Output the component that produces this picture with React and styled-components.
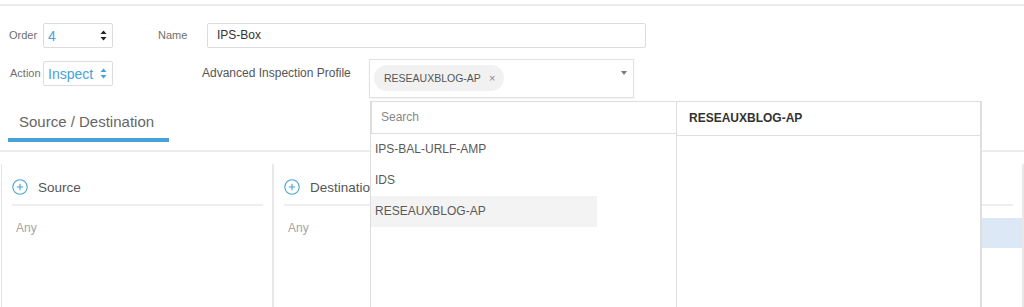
import React from 'react';
import styled, { createGlobalStyle } from 'styled-components';

const GlobalStyle = createGlobalStyle`
	body {
		margin: 0;
		background: #fff;
		font-family: "Liberation Sans", Arial, sans-serif;
	}
`

const Page = styled.div`
	width: 1024px;
	height: 307px;
	overflow: hidden;
	position: relative;
`

const TopRule = styled.div`
	margin-top: 4px;
	height: 2px;
	background: #ececec;
`

const Form = styled.div`
	padding-top: 17px;
`

const Row = styled.div`
	display: flex;
	align-items: flex-start;
	padding-left: ${p => p.$indent}px;
	margin-top: ${p => p.$top || 0}px;
	height: ${p => p.$height}px;
`

const Label = styled.label`
	width: ${p => p.$width}px;
	margin-left: ${p => p.$offset || 0}px;
	margin-top: ${p => p.$top || 0}px;
	height: 25px;
	line-height: 25px;
	font-size: ${p => p.$size || 11}px;
	color: ${p => p.$color || '#707070'};
	white-space: nowrap;
`

const Select = styled.div`
	box-sizing: border-box;
	width: 70px;
	height: 25px;
	margin-top: ${p => p.$top || 0}px;
	border: 1px solid #dcdcdc;
	border-radius: 2px;
	display: flex;
	align-items: center;
	justify-content: space-between;
	padding: 0 5px 0 4px;
	font-size: 14px;
	color: #47a2d8;
`

const TextInput = styled.div`
	box-sizing: border-box;
	width: 439px;
	height: 25px;
	border: 1px solid #dcdcdc;
	border-radius: 2px;
	padding-left: 9px;
	line-height: 23px;
	font-size: 12px;
	color: #333;
`

const MultiWrap = styled.div`
	position: relative;
`

const MultiBox = styled.div`
	box-sizing: border-box;
	width: 265px;
	height: 39px;
	border: 1px solid #e2e2e2;
	box-shadow: 0 1px 2px rgba(0, 0, 0, 0.06);
	display: flex;
	align-items: flex-start;
	padding: 5px 4px;
`

const Chip = styled.span`
	height: 26px;
	border-radius: 13px;
	background: #f1f1f1;
	display: flex;
	align-items: center;
	padding: 0 9px 0 10px;
	font-size: 10.5px;
	color: #555;
`

const ChipClose = styled.span`
	margin-left: 8px;
	font-size: 11px;
	color: #888;
`

const Caret = styled.span`
	margin-left: auto;
	margin-right: 2px;
	margin-top: 6px;
	width: 0;
	height: 0;
	border-left: 3.5px solid transparent;
	border-right: 3.5px solid transparent;
	border-top: 4px solid #7a7a7a;
`

const Dropdown = styled.div`
	position: absolute;
	top: 42px;
	left: 1px;
	width: 612px;
	height: 240px;
	display: flex;
	background: #fff;
	z-index: 5;
`

const ListPane = styled.div`
	box-sizing: border-box;
	width: 307px;
	border-left: 1px solid #ddd;
	border-right: 1px solid #ddd;
	background: #fff;
`

const Search = styled.div`
	box-sizing: border-box;
	height: 33px;
	border: 1px solid #ddd;
	border-right: none;
	padding-left: 9px;
	line-height: 31px;
	font-size: 12px;
	color: #888;
`

const Item = styled.div`
	box-sizing: border-box;
	width: ${p => (p.$active ? '226px' : 'auto')};
	height: 31px;
	line-height: 31px;
	padding-left: 4px;
	font-size: 12px;
	color: #5a5a5a;
	background: ${p => (p.$active ? '#f3f3f3' : 'transparent')};
`

const DetailPane = styled.div`
	box-sizing: border-box;
	width: 305px;
	border-top: 1px solid #ddd;
	border-right: 2px solid #dedede;
	background: #fff;
`

const DetailHeader = styled.div`
	height: 33px;
	line-height: 33px;
	border-bottom: 1px solid #ddd;
	padding-left: 12px;
	font-size: 12px;
	font-weight: bold;
	color: #333;
`

const TabBar = styled.div`
	padding-bottom: 8px;
	border-bottom: 2px solid #ececec;
`

const Tab = styled.div`
	width: 150px;
	margin-left: 8px;
	padding: 13px 0 5px 11px;
	line-height: 22px;
	font-size: 15px;
	color: #666;
	border-bottom: 4px solid #47a2d8;
`

const Columns = styled.div`
	display: flex;
	margin-top: 12px;
	padding-left: 1px;
	height: 150px;
`

const Column = styled.div`
	box-sizing: border-box;
	width: ${p => (p.$width ? `${p.$width}px` : 'auto')};
	flex: ${p => (p.$width ? 'none' : '1')};
	border-left: ${p => (p.$first ? '1px solid #e6e6e6' : 'none')};
	border-right: 2px solid #e8e8e8;
	padding: 10px 9px 0 10px;
`

const ColumnHeader = styled.div`
	height: 26px;
	padding-bottom: 4px;
	border-bottom: 2px solid #eeeeee;
	display: flex;
	align-items: center;
	gap: 10px;
	font-size: 13.5px;
	color: #555;
`

const Empty = styled.div`
	margin-top: 15px;
	padding-left: 4px;
	line-height: 14px;
	font-size: 12px;
	color: #a5a5a5;
`

const SelectedRow = styled.div`
	margin: 12px -9px 0 -10px;
	height: 30px;
	background: #dce8f6;
`

const Spinner = ({ color }) => (
	<svg width="7" height="11" viewBox="0 0 7 11">
		<path d="M3.5 0.5 L6.5 4 L0.5 4 Z" fill={color} />
		<path d="M3.5 10.5 L6.5 7 L0.5 7 Z" fill={color} />
	</svg>
)

const PlusCircle = () => (
	<svg width="16" height="16" viewBox="0 0 16 16">
		<circle cx="8" cy="8" r="7.2" fill="none" stroke="#47a2d8" strokeWidth="1.1" />
		<path d="M8 4.8 V11.2 M4.8 8 H11.2" stroke="#47a2d8" strokeWidth="1.1" />
	</svg>
)

const profiles = ['IPS-BAL-URLF-AMP', 'IDS', 'RESEAUXBLOG-AP'];

export default function App() {
	return (
		<Page>
			<GlobalStyle />
			<TopRule />
			<Form>
				<Row $indent={9} $height={25}>
					<Label $width={34}>Order</Label>
					<Select>
						<span>4</span>
						<Spinner color="#222" />
					</Select>
					<Label $width={49} $offset={45}>Name</Label>
					<TextInput>IPS-Box</TextInput>
				</Row>
				<Row $indent={10} $top={11} $height={39}>
					<Label $width={33} $top={2}>Action</Label>
					<Select $top={2}>
						<span>Inspect</span>
						<Spinner color="#47a2d8" />
					</Select>
					<Label $width={167} $offset={89} $top={2} $size={12} $color="#555">
						Advanced Inspection Profile
					</Label>
					<MultiWrap>
						<MultiBox>
							<Chip>
								RESEAUXBLOG-AP<ChipClose>×</ChipClose>
							</Chip>
							<Caret />
						</MultiBox>
						<Dropdown>
							<ListPane>
								<Search>Search</Search>
								{profiles.map(name => (
									<Item key={name} $active={name === 'RESEAUXBLOG-AP'}>{name}</Item>
								))}
							</ListPane>
							<DetailPane>
								<DetailHeader>RESEAUXBLOG-AP</DetailHeader>
							</DetailPane>
						</Dropdown>
					</MultiWrap>
				</Row>
			</Form>
			<TabBar>
				<Tab>Source / Destination</Tab>
			</TabBar>
			<Columns>
				<Column $width={273} $first>
					<ColumnHeader><PlusCircle />Source</ColumnHeader>
					<Empty>Any</Empty>
				</Column>
				<Column $width={273}>
					<ColumnHeader><PlusCircle />Destination</ColumnHeader>
					<Empty>Any</Empty>
				</Column>
				<Column>
					<ColumnHeader><PlusCircle />Ports</ColumnHeader>
					<SelectedRow />
				</Column>
			</Columns>
		</Page>
	)
}
